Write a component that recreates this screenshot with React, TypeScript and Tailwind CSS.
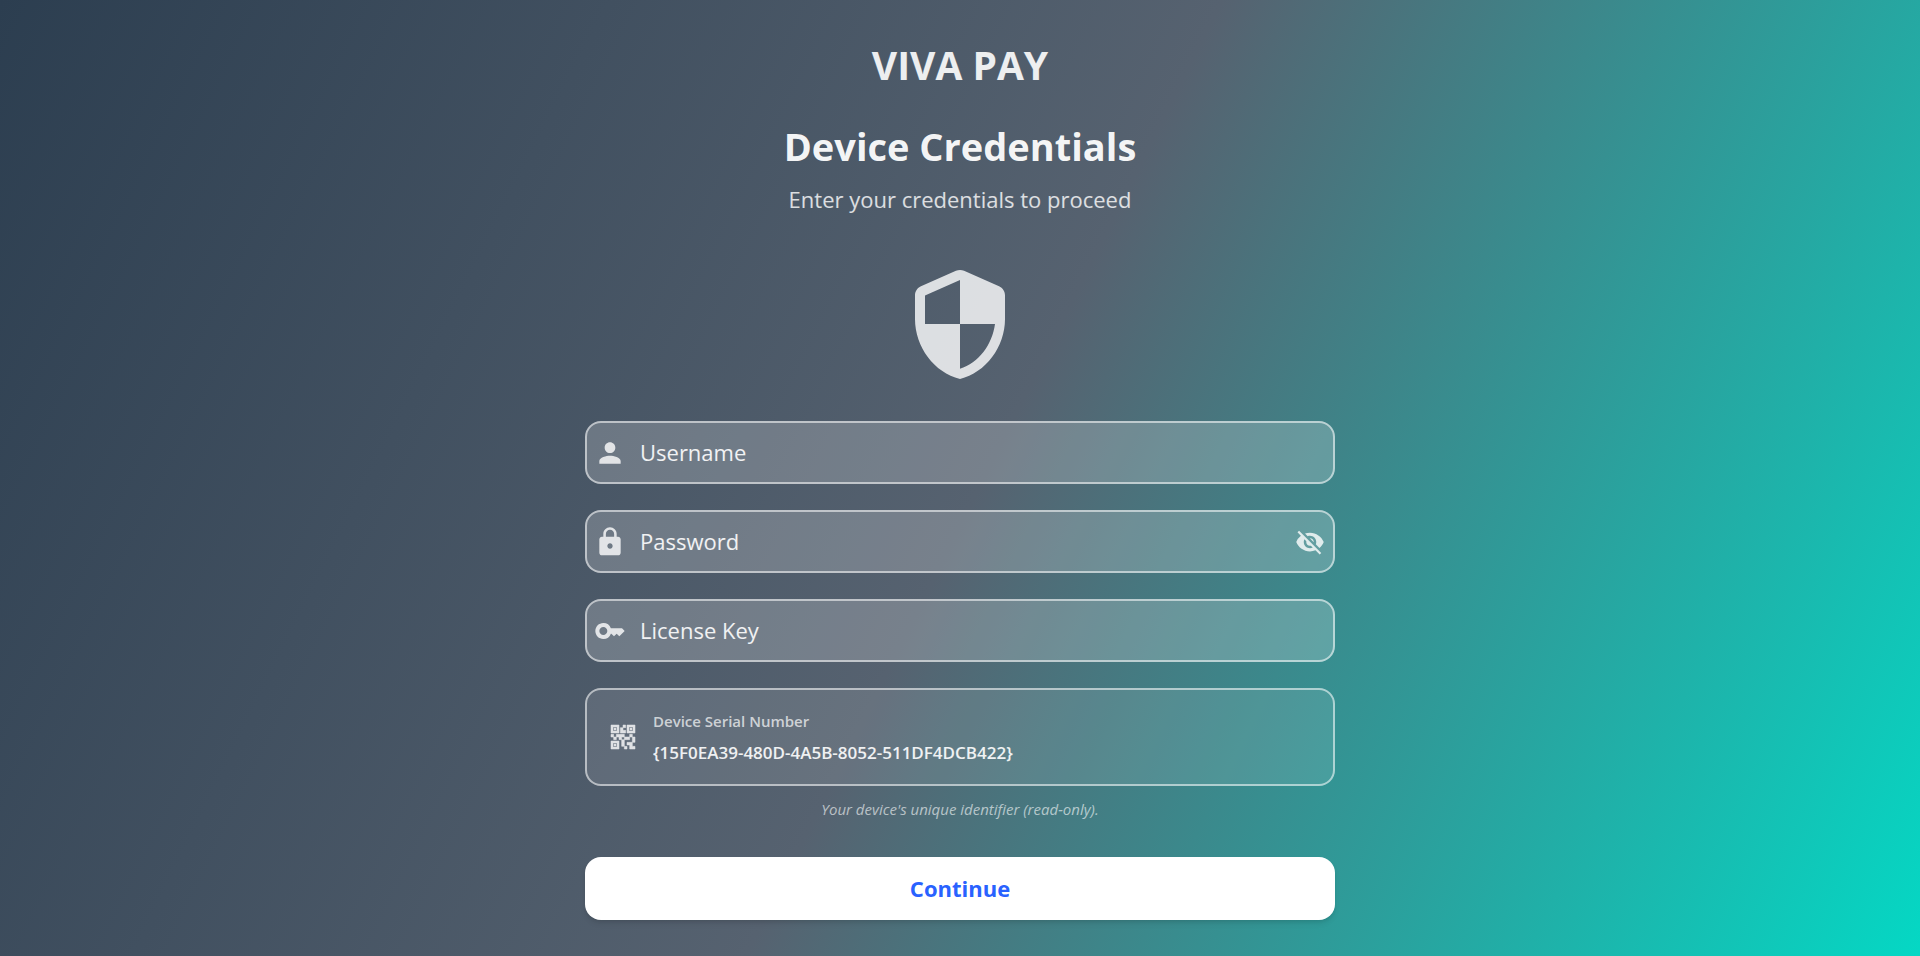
import React, { useState } from 'react';
import { MdKey, MdLock, MdPerson, MdQrCode2, MdVisibility, MdVisibilityOff } from 'react-icons/md';

const SERIAL_NUMBER = '{15F0EA39-480D-4A5B-8052-511DF4DCB422}';

interface CredentialFieldProps {
  id: string;
  label: string;
  type?: string;
  icon: React.ReactNode;
  children?: React.ReactNode;
}

function ShieldIcon() {
  return (
    <svg viewBox="0 0 24 24" className="mt-[49px] size-[120px] self-center text-white/80" fill="currentColor" aria-hidden="true">
      <path
        fillRule="evenodd"
        d="M4.19 4.47 11.19 1.36c.52-.23 1.11-.23 1.62 0l7 3.11c.72.32 1.19 1.04 1.19 1.83V11c0 5.55-3.84 10.74-9 12-5.16-1.26-9-6.45-9-12V6.3c0-.79.47-1.51 1.19-1.83zM12 11.99h7c-.53 4.12-3.28 7.79-7 8.94V12H5V6.3l7-3.11v8.8z"
      />
    </svg>
  );
}

function CredentialField({ id, label, type = 'text', icon, children }: CredentialFieldProps) {
  const [value, setValue] = useState('');

  return (
    <div className="flex h-[63px] items-center rounded-2xl border-2 border-white/55 bg-white/20 pr-2 pl-[7px] text-white/80">
      <label htmlFor={id} aria-label={label} className="shrink-0">
        {icon}
      </label>
      <input
        id={id}
        type={type}
        value={value}
        onChange={(e) => setValue(e.target.value)}
        placeholder={label}
        className="ml-3.5 min-w-0 flex-1 bg-transparent text-[22px] text-white/90 outline-none placeholder:text-white/90"
      />
      {children}
    </div>
  );
}

export default function App() {
  const [showPassword, setShowPassword] = useState(false);

  return (
    <main className="flex min-h-screen justify-center bg-[linear-gradient(116.5deg,#2c3e50_0%,#566270_51%,#03dac6_101%)] px-6 pt-[39px] pb-9 font-['Open_Sans','Noto_Sans',sans-serif]">
      <form className="flex w-full max-w-[750px] flex-col" onSubmit={(e) => e.preventDefault()}>
        <header className="text-center">
          <p className="text-[39px] leading-[52px] font-bold text-white/90">VIVA PAY</p>
          <h1 className="mt-[29px] text-[38px] leading-[52px] font-bold text-white/95">Device Credentials</h1>
          <p className="mt-[11px] text-[22px] leading-8 text-white/80">Enter your credentials to proceed</p>
        </header>

        <ShieldIcon />

        <div className="mt-[37px] flex flex-col gap-[26px]">
          <CredentialField id="username" label="Username" icon={<MdPerson size={32} />} />
          <CredentialField
            id="password"
            label="Password"
            type={showPassword ? 'text' : 'password'}
            icon={<MdLock size={32} />}
          >
            <button
              type="button"
              aria-label={showPassword ? 'Hide password' : 'Show password'}
              onClick={() => setShowPassword(!showPassword)}
              className="shrink-0"
            >
              {showPassword ? <MdVisibility size={30} /> : <MdVisibilityOff size={30} />}
            </button>
          </CredentialField>
          <CredentialField id="license" label="License Key" icon={<MdKey size={32} />} />

          <div className="flex h-[98px] items-center rounded-2xl border-2 border-white/55 bg-white/10 px-5">
            <MdQrCode2
              size={32}
              strokeWidth={0.4}
              className="shrink-0 text-white opacity-80 [&>path[fill=none]]:stroke-none"
            />
            <div className="ml-3.5 flex min-w-0 flex-1 flex-col">
              <label htmlFor="serial" className="text-[15px] leading-6 font-semibold text-white/70">
                Device Serial Number
              </label>
              <input
                id="serial"
                readOnly
                value={SERIAL_NUMBER}
                className="mt-2 w-full bg-transparent text-[17px] leading-6 font-semibold text-white/90 outline-none"
              />
            </div>
          </div>
        </div>

        <p className="mt-[11px] text-center text-[15px] leading-6 text-white/60 italic">
          Your device's unique identifier (read-only).
        </p>

        <button
          type="submit"
          className="mt-9 h-[63px] rounded-2xl bg-white text-[22px] font-bold text-[#2962ff] shadow-md"
        >
          Continue
        </button>
      </form>
    </main>
  );
}
